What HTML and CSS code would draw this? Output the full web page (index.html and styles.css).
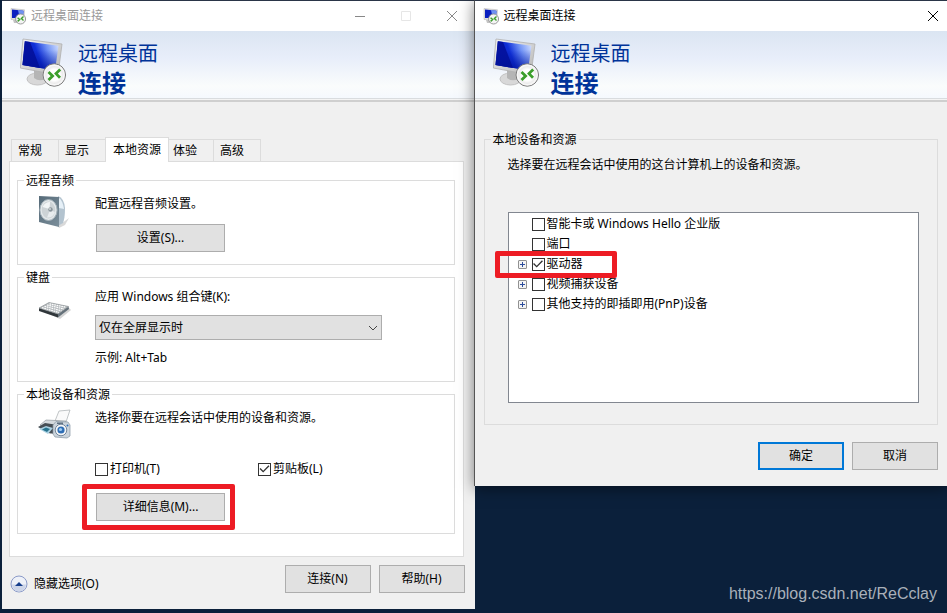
FILE: index.html
```html
<!DOCTYPE html>
<html lang="zh-CN">

<head>
    <meta charset="UTF-8">
    <meta name="viewport" content="width=device-width, initial-scale=1.0">
    <title>远程桌面连接</title>
    <link rel="stylesheet" href="styles.css">
</head>

<body>
    <!-- 公用图标 -->
    <svg class="defs" width="0" height="0" aria-hidden="true">
        <defs>
            <linearGradient id="g-screen" x1="0" y1="0.3" x2="1" y2="0">
                <stop offset="0" stop-color="#0818b0" />
                <stop offset="0.35" stop-color="#1030d8" />
                <stop offset="0.65" stop-color="#7294f6" />
                <stop offset="1" stop-color="#dbe6ff" />
            </linearGradient>
            <linearGradient id="g-shade" x1="0" y1="0" x2="0" y2="1">
                <stop offset="0.3" stop-color="#0014a0" stop-opacity="0" />
                <stop offset="1" stop-color="#000f90" stop-opacity="0.7" />
            </linearGradient>
            <linearGradient id="g-bezel" x1="0" y1="0" x2="1" y2="1">
                <stop offset="0" stop-color="#f4f4f4" />
                <stop offset="1" stop-color="#b4b4b4" />
            </linearGradient>
            <radialGradient id="g-disc">
                <stop offset="0.5" stop-color="#ffffff" />
                <stop offset="1" stop-color="#d8d8d8" />
            </radialGradient>
            <linearGradient id="g-box" x1="0" y1="0" x2="1" y2="1">
                <stop offset="0" stop-color="#566b79" />
                <stop offset="1" stop-color="#7b8e9a" />
            </linearGradient>
            <symbol id="icon-rdp" viewBox="0 0 48 52">
                <ellipse cx="17.500" cy="41" rx="10.500" ry="6" fill="#d8d8d8" stroke="#c2c2c2" />
                <path d="M14 32 L25 34 L25 41 Q19 44 14 40Z" fill="#b5b5b5" />
                <path d="M3 1 L42 6 L38 37 L0.300 30Z" fill="url(#g-bezel)" stroke="#b0b0b0" stroke-width=".8" />
                <path d="M4.800 3.200 L38.500 7.700 L35 32.500 L2.500 27Z" fill="url(#g-screen)" />
                <path d="M4.800 3.200 L10 3.900 L20 30 L2.500 27Z" fill="#0412a0" />
                <path d="M4.800 3.200 L38.500 7.700 L35 32.500 L2.500 27Z" fill="url(#g-shade)" />
                <circle cx="34.300" cy="37" r="11.200" fill="url(#g-disc)" stroke="#777777" />
                <circle cx="34.300" cy="37" r="9.800" fill="none" stroke="#f6f6f6" stroke-width="1.600" />
                <path d="M28.500 34 L32.600 38 L28.500 42 M40.200 31.500 L36 35.600 L40 39.800" fill="none"
                    stroke="#3c9f2c" stroke-width="2.800" />
            </symbol>
            <symbol id="icon-rdp-small" viewBox="0 0 16 17">
                <path d="M3 12 H8 V15 H4Z" fill="#c4c4c4" />
                <path d="M1 0.500 L14.500 1.800 L14 12 L1 11.500Z" fill="#dedede" stroke="#b4b4b4" stroke-width=".5" />
                <path d="M2 1.500 L13.500 2.700 L13 10 L2 10Z" fill="#0a1fc0" />
                <path d="M8 2.100 L13.500 2.700 L13 9 L9.500 9Z" fill="#6f92f2" />
                <circle cx="10.600" cy="11" r="5" fill="#f4f4f4" stroke="#858585" stroke-width=".8" />
                <path d="M7.600 9.800 L9.700 11.600 L7.600 13.400 M13.500 8.600 L11.400 10.500 L13.500 12.400" fill="none"
                    stroke="#3c9f2c" stroke-width="1.400" />
            </symbol>
        </defs>
    </svg>

    <div class="desktop">
        <!-- 主窗口 -->
        <section class="window">
            <header class="titlebar inactive">
                <svg class="title-icon"><use href="#icon-rdp-small" /></svg>
                <span class="title-text">远程桌面连接</span>
                <button class="win-btn" type="button" aria-label="最小化">
                    <svg width="12" height="12"><path d="M1 6.500H11" /></svg>
                </button>
                <button class="win-btn disabled" type="button" aria-label="最大化" disabled>
                    <svg width="12" height="12"><path d="M1.500 1.500H10.500V10.500H1.500Z" /></svg>
                </button>
                <button class="win-btn" type="button" aria-label="关闭">
                    <svg width="12" height="12"><path d="M1 1L11 11M11 1L1 11" /></svg>
                </button>
            </header>
            <div class="banner">
                <svg class="banner-icon"><use href="#icon-rdp" /></svg>
                <h1 class="banner-title">远程桌面<strong>连接</strong></h1>
            </div>

            <form class="main-body">
                <div class="tabs" role="tablist">
                    <button class="tab" type="button" role="tab">常规</button>
                    <button class="tab" type="button" role="tab">显示</button>
                    <button class="tab active" type="button" role="tab" aria-selected="true">本地资源</button>
                    <button class="tab" type="button" role="tab">体验</button>
                    <button class="tab" type="button" role="tab">高级</button>
                </div>

                <div class="panel" role="tabpanel">
                    <fieldset class="group">
                        <legend>远程音频</legend>
                        <div class="group-row">
                            <svg class="group-icon" viewBox="0 0 33 33">
                                <path d="M20 31 L31 23 L27 30 L21 33Z" fill="#d9d9d9" />
                                <path d="M20 1 Q26 3 27 13 Q27 23 25 28 L20 31Z" fill="#b3c3cf" />
                                <path d="M21 3 Q25 6 26 14 L21 13Z" fill="#e6f0f7" />
                                <path d="M1 1 L21 2 L21 32 L1 27Z" fill="url(#g-box)" />
                                <ellipse cx="10.500" cy="15" rx="8.600" ry="10.500" fill="#e3e8ea" stroke="#a3b0b8" />
                                <ellipse cx="10.500" cy="15" rx="6.800" ry="8.500" fill="#cdd3d6" />
                                <path d="M4.500 12 Q7 7 12 7 L11.500 14Z" fill="#f2f5f6" />
                                <path d="M12 15 L17 17 Q15 23 9 22.500Z" fill="#e8ecee" />
                                <circle cx="12.500" cy="14.500" r="2.200" fill="#8b969c" />
                                <circle cx="12" cy="14" r=".8" fill="#ffffff" />
                            </svg>
                            <div class="group-content">
                                <p>配置远程音频设置。</p>
                                <button class="btn wide" type="button">设置(S)...</button>
                            </div>
                        </div>
                    </fieldset>

                    <fieldset class="group">
                        <legend>键盘</legend>
                        <div class="group-row keyboard">
                            <svg class="group-icon" viewBox="0 0 33 33">
                                <path d="M4 21 L22 29 L33 20 L31 18Z" fill="#d4d4d4" />
                                <path d="M1 18 L1 21 L20 27.500 L20 24Z" fill="#30363a" />
                                <path d="M20 24 L20 27.500 L31 19 L30.500 16.500Z" fill="#65717a" />
                                <path d="M1 18 L11 12.500 L30.500 16.500 L20 24Z" fill="#b5babd" stroke="#80868a" stroke-width=".6" />
                                <path d="M4 17.700 L21 22.500 M6.500 16.300 L23.500 20.800 M9 15 L26 19 M11.500 13.800 L28 17.200"
                                    stroke="#ffffff" stroke-width="1.200" stroke-dasharray="1.700 .7" />
                            </svg>
                            <div class="group-content">
                                <label for="combo">应用 Windows 组合键(K):</label>
                                <div class="select">
                                    <select id="combo">
                                        <option>仅在全屏显示时</option>
                                        <option>在这台计算机上</option>
                                        <option>在远程计算机上</option>
                                    </select>
                                    <svg width="10" height="6"><path d="M1 1L5 5L9 1" /></svg>
                                </div>
                                <p>示例: Alt+Tab</p>
                            </div>
                        </div>
                    </fieldset>

                    <fieldset class="group">
                        <legend>本地设备和资源</legend>
                        <div class="group-row devices">
                            <svg class="group-icon" viewBox="0 0 33 33">
                                <path d="M17 12 L21 2 L32 1 L28 13Z" fill="#fafafa" stroke="#a8adb0" stroke-width=".7" />
                                <path d="M2 16 L8 11 L28 12 L24 20 L12 24Z" fill="#d5dade" stroke="#858d93" stroke-width=".6" />
                                <path d="M0 18 L7 14 L20 16 L17 25 L10 24Z" fill="#464e55" />
                                <path d="M1 20 L8 17 L15 19 L10 25Z" fill="#a9d0e2" />
                                <path d="M4 20.500 L8 18.500 L12 20 L9 23Z" fill="#26738e" />
                                <path d="M15 16 L18 12.500 L30 13 L32 16 L32 27 L29 29 L17 28 L15 25Z" fill="#cbd4dc" stroke="#8796a4"
                                    stroke-width=".7" />
                                <path d="M19 13.500 H25 V15 H19Z" fill="#5d6f80" />
                                <circle cx="23" cy="21" r="5.800" fill="#f4f6f8" stroke="#75879a" />
                                <circle cx="23" cy="21" r="3.600" fill="#2e6eb5" />
                                <circle cx="22.500" cy="20.500" r="1.600" fill="#9ecbf2" />
                                <circle cx="29.500" cy="16.500" r="1" fill="#2e6eb5" />
                            </svg>
                            <div class="group-content">
                                <p>选择你要在远程会话中使用的设备和资源。</p>
                                <div class="checks">
                                    <label class="check"><input type="checkbox">打印机(T)</label>
                                    <label class="check"><input type="checkbox" checked>剪贴板(L)</label>
                                </div>
                                <div class="marked marked-btn">
                                    <button class="btn wide" type="button">详细信息(M)...</button>
                                </div>
                            </div>
                        </div>
                    </fieldset>
                </div>

                <footer class="main-footer">
                    <button class="toggle" type="button">
                        <svg width="18" height="18">
                            <circle cx="9" cy="9" r="8" fill="#eef1f8" stroke="#8b9ac8" />
                            <path d="M2 9.500 A7 7 0 0 0 16 9.500Z" fill="#cdd5e8" />
                            <path d="M5 11 L9 7 L13 11Z" fill="#173f8c" />
                        </svg>
                        隐藏选项(O)
                    </button>
                    <button class="btn" type="button">连接(N)</button>
                    <button class="btn" type="button">帮助(H)</button>
                </footer>
            </form>
        </section>

        <!-- 详细信息窗口 -->
        <section class="window front">
            <header class="titlebar">
                <svg class="title-icon"><use href="#icon-rdp-small" /></svg>
                <span class="title-text">远程桌面连接</span>
                <button class="win-btn edge" type="button" aria-label="关闭">
                    <svg width="12" height="12"><path d="M1 1L11 11M11 1L1 11" /></svg>
                </button>
            </header>
            <div class="banner">
                <svg class="banner-icon"><use href="#icon-rdp" /></svg>
                <h2 class="banner-title">远程桌面<strong>连接</strong></h2>
            </div>

            <form class="detail-body">
                <fieldset class="group">
                    <legend>本地设备和资源</legend>
                    <div class="detail-content">
                        <p>选择要在远程会话中使用的这台计算机上的设备和资源。</p>
                        <ul class="tree">
                            <li><label class="check"><input type="checkbox">智能卡或 Windows Hello 企业版</label></li>
                            <li><label class="check"><input type="checkbox">端口</label></li>
                            <li class="parent">
                                <div class="marked marked-row">
                                    <button class="expand" type="button" aria-label="展开"></button>
                                    <label class="check"><input type="checkbox" checked>驱动器</label>
                                </div>
                            </li>
                            <li class="parent">
                                <button class="expand" type="button" aria-label="展开"></button>
                                <label class="check"><input type="checkbox">视频捕获设备</label>
                            </li>
                            <li class="parent">
                                <button class="expand" type="button" aria-label="展开"></button>
                                <label class="check"><input type="checkbox">其他支持的即插即用(PnP)设备</label>
                            </li>
                        </ul>
                    </div>
                </fieldset>
                <footer class="detail-footer">
                    <button class="btn default" type="submit">确定</button>
                    <button class="btn" type="button">取消</button>
                </footer>
            </form>
        </section>

        <span class="watermark">https://blog.csdn.net/ReCclay</span>
    </div>
</body>

</html>
```
FILE: styles.css
```css
* {
    margin: 0;
    padding: 0;
    box-sizing: border-box;
}

body {
    font: 12px/18px "Noto Sans", "Noto Sans CJK SC", sans-serif;
    color: #000;
    background-color: #0b203b;
}

button,
select {
    font: inherit;
    color: inherit;
}

li {
    list-style: none;
}

svg {
    display: block;
    flex: none;
}

.defs {
    position: absolute;
}

.desktop {
    position: relative;
    display: flex;
    align-items: flex-start;
    min-height: 100vh;
    padding-left: 2px;
    overflow: hidden;
}

/* 窗口 */
.window {
    flex: 1 1 0;
    min-width: 0;
    background-color: #f0f0f0;
    border-top: 1px solid #2a3547;
}

.window.front {
    position: relative;
    margin-left: -1px;
    border-left: 1px solid #555;
    box-shadow: 0 2px 14px rgba(0, 0, 0, 0.5);
}

.titlebar {
    display: flex;
    align-items: center;
    height: 30px;
    padding-left: 8px;
    background-color: #fff;
}

.title-icon {
    width: 16px;
    height: 17px;
}

.title-text {
    flex: 1;
    padding-left: 5px;
}

.inactive .title-text {
    color: #999;
}

.win-btn {
    display: flex;
    align-items: center;
    justify-content: center;
    width: 46px;
    height: 30px;
    border: 0;
    background: none;
}

.win-btn.edge {
    width: 29px;
}

.win-btn path {
    fill: none;
    stroke: #000;
}

.inactive .win-btn path {
    stroke: #888;
}

.inactive .disabled path {
    stroke: #e6e6e6;
}

.banner {
    display: flex;
    gap: 10px;
    height: 71px;
    padding: 7px 18px 0;
    background: linear-gradient(#dbe5f2, #e8eefa 40%, #fafcfc 80%, #f4f8fe);
    border-bottom: 2px solid #cfcfcf;
    box-shadow: inset 0 -1px #f4f4f4, inset 0 -2px #d9dcdf;
}

.banner-icon {
    width: 48px;
    height: 52px;
}

.banner-title {
    padding-top: 3px;
    font-size: 20px;
    font-weight: normal;
    line-height: 26px;
    color: #039;
}

.banner-title strong {
    display: block;
    font-size: 24px;
    line-height: 32px;
}

/* 选项卡 */
.main-body {
    padding: 35px 11px 16px 7px;
}

.tabs {
    display: flex;
    align-items: flex-end;
    padding-left: 2px;
}

.tab {
    height: 22px;
    padding: 0 16px 0 6px;
    border: 1px solid #dcdcdc;
    border-width: 1px 0 0 1px;
    background-color: #f0f0f0;
}

.tab:last-child {
    border-right-width: 1px;
}

.tab.active {
    position: relative;
    height: 25px;
    margin-bottom: -1px;
    padding: 0 7px;
    border-width: 1px 1px 0;
    background-color: #fff;
}

.tab.active + .tab {
    padding-left: 4px;
    border-left-width: 0;
}

.panel {
    display: flex;
    flex-direction: column;
    gap: 4px;
    padding: 10px 8px 22px 7px;
    border: 1px solid #dcdcdc;
    background-color: #fff;
}

.group {
    min-width: 0;
    border: 1px solid #dcdcdc;
}

.group legend {
    margin-left: 6px;
    padding: 0 2px;
    line-height: 17px;
}

.group-row {
    display: flex;
    gap: 24px;
    padding: 6px 72px 12px 20px;
}

.group-icon {
    width: 33px;
    height: 33px;
}

.group-content {
    flex: 1;
    display: flex;
    flex-direction: column;
    align-items: flex-start;
    gap: 11px;
}

.keyboard {
    padding-top: 2px;
    padding-bottom: 14px;
}

.keyboard .group-content {
    gap: 9px;
}

.keyboard .group-icon {
    margin-top: 2px;
}

.devices .group-content {
    gap: 15px;
}

.checks {
    display: grid;
    grid-template-columns: 163px auto;
    padding-top: 18px;
}

.btn {
    width: 86px;
    height: 28px;
    border: 1px solid #adadad;
    background-color: #e1e1e1;
}

.btn.wide {
    width: 129px;
    margin-left: 1px;
}

.btn.default {
    border: 2px solid #0078d7;
}

.select {
    position: relative;
    width: 100%;
}

.select select {
    display: block;
    appearance: none;
    width: 100%;
    height: 25px;
    padding: 0 20px 0 3px;
    border: 1px solid #adadad;
    border-radius: 0;
    background-color: #e1e1e1;
}

.select svg {
    position: absolute;
    top: 10px;
    right: 4px;
    pointer-events: none;
}

.select path {
    fill: none;
    stroke: #444;
}

.check {
    display: inline-flex;
    align-items: center;
    gap: 2px;
}

.check input {
    appearance: none;
    flex: none;
    width: 13px;
    height: 13px;
    border: 1px solid #333;
    background-color: #fff;
}

.check input:checked::after {
    content: "";
    display: block;
    width: 11px;
    height: 11px;
    background-color: #333;
    clip-path: polygon(5% 50%, 14% 41%, 38% 65%, 86% 15%, 95% 24%, 38% 82%);
}

.main-footer {
    display: flex;
    align-items: flex-end;
    gap: 8px;
    margin-right: -1px;
    padding: 8px 0 0 1px;
}

.toggle {
    display: flex;
    align-items: center;
    gap: 6px;
    margin-right: auto;
    border: 0;
    background: none;
}

/* 红色标注框 */
.marked {
    position: relative;
}

.marked::after {
    content: "";
    position: absolute;
    z-index: 1;
    border: 5px solid #ed1c24;
    border-radius: 2px;
    pointer-events: none;
}

.marked-btn::after {
    inset: -9px -10px -9px -13px;
}

.marked-row::after {
    inset: -3px -34px -4px -23px;
}

/* 设备列表 */
.detail-body {
    padding: 29px 9px 16px;
}

.detail-content {
    padding: 8px 18px 21px 23px;
}

.tree {
    height: 191px;
    margin-top: 38px;
    padding: 1px 0 0 23px;
    border: 1px solid #828790;
    background-color: #fff;
}

.tree li {
    display: flex;
    height: 20px;
}

.tree .parent {
    margin-left: -14px;
}

.tree .parent,
.marked-row {
    display: flex;
    align-items: center;
    gap: 5px;
}

.marked-row {
    height: 20px;
}

.expand {
    width: 9px;
    height: 9px;
    border: 1px solid #919191;
    border-radius: 1px;
    background: linear-gradient(#2b4c9b, #2b4c9b) center / 5px 1px no-repeat,
        linear-gradient(#2b4c9b, #2b4c9b) center / 1px 5px no-repeat,
        #f4f4f4;
}

.detail-footer {
    display: flex;
    justify-content: flex-end;
    gap: 8px;
    padding-top: 17px;
}

.watermark {
    position: absolute;
    right: 10px;
    bottom: 9px;
    font: 16px/20px "Liberation Sans", Arial, sans-serif;
    color: #a9b0ba;
}
```
